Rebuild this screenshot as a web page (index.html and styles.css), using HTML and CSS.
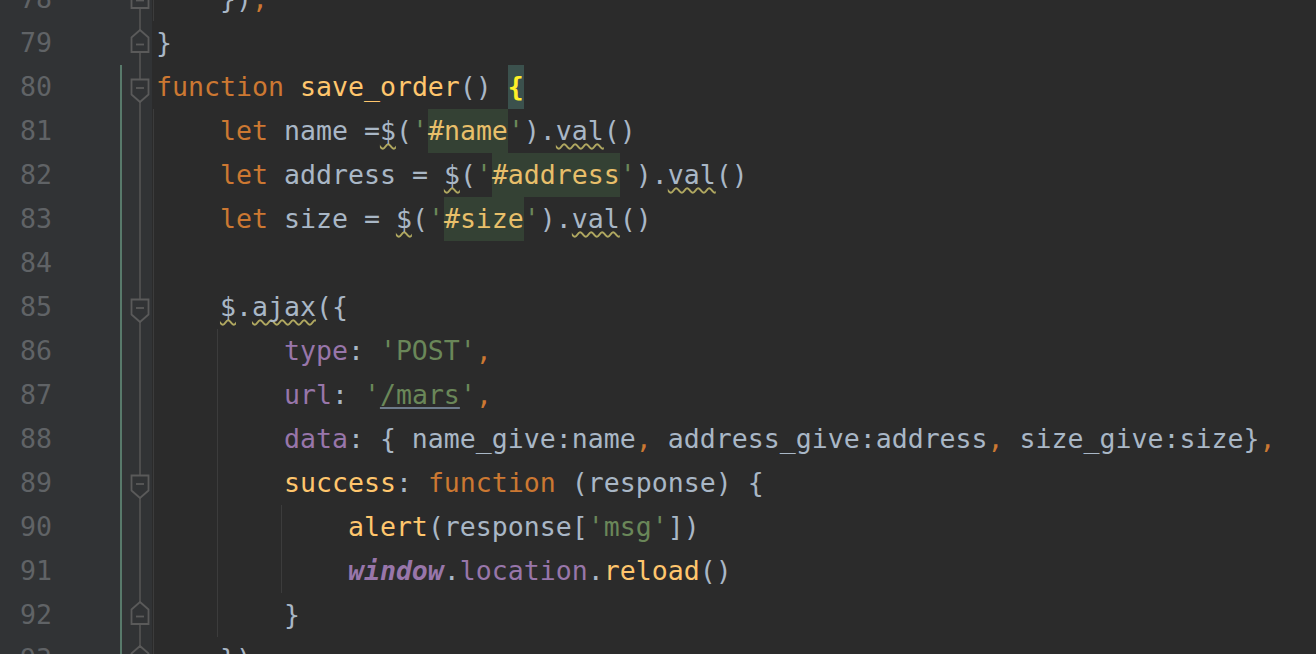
FILE: index.html
```html
<!DOCTYPE html>
<html>
<head>
<meta charset="utf-8">
<link rel="stylesheet" href="styles.css">
</head>
<body>
<div class="editor">
  <div class="row">
    <div class="ln">78</div><div class="vcs"></div>
    <div class="fold"><svg class="mk" viewBox="0 0 30 44"><path class="mk-s" d="M18,9 L26.5,16.5 V31 H9.5 V16.5 Z"/><path class="mk-m" d="M14,23.5 H22"/></svg></div>
    <div class="code g0">    <span class="p">})</span><span class="kw">;</span></div>
  </div>
  <div class="row">
    <div class="ln">79</div><div class="vcs"></div>
    <div class="fold"><svg class="mk" viewBox="0 0 30 44"><path class="mk-s" d="M18,9 L26.5,16.5 V31 H9.5 V16.5 Z"/><path class="mk-m" d="M14,23.5 H22"/></svg></div>
    <div class="code"><span class="p">}</span></div>
  </div>
  <div class="row">
    <div class="ln">80</div><div class="vcs on"></div>
    <div class="fold"><svg class="mk" viewBox="0 0 30 44"><path class="mk-s" d="M9.5,14.5 H26.5 V29.5 L18,37 L9.5,29.5 Z"/><path class="mk-m" d="M14,23 H22"/></svg></div>
    <div class="code"><span class="kw">function</span> <span class="fn">save_order</span><span class="p">() </span><span class="brace">{</span></div>
  </div>
  <div class="row">
    <div class="ln">81</div><div class="vcs on"></div>
    <div class="fold"></div>
    <div class="code g0">    <span class="kw">let</span><span class="p"> name =</span><span class="p wv">$</span><span class="p">(</span><span class="str">'</span><span class="sel">#name</span><span class="str">'</span><span class="p">).</span><span class="p wv">val</span><span class="p">()</span></div>
  </div>
  <div class="row">
    <div class="ln">82</div><div class="vcs on"></div>
    <div class="fold"></div>
    <div class="code g0">    <span class="kw">let</span><span class="p"> address = </span><span class="p wv">$</span><span class="p">(</span><span class="str">'</span><span class="sel">#address</span><span class="str">'</span><span class="p">).</span><span class="p wv">val</span><span class="p">()</span></div>
  </div>
  <div class="row">
    <div class="ln">83</div><div class="vcs on"></div>
    <div class="fold"></div>
    <div class="code g0">    <span class="kw">let</span><span class="p"> size = </span><span class="p wv">$</span><span class="p">(</span><span class="str">'</span><span class="sel">#size</span><span class="str">'</span><span class="p">).</span><span class="p wv">val</span><span class="p">()</span></div>
  </div>
  <div class="row">
    <div class="ln">84</div><div class="vcs on"></div>
    <div class="fold"></div>
    <div class="code g0"></div>
  </div>
  <div class="row">
    <div class="ln">85</div><div class="vcs on"></div>
    <div class="fold"><svg class="mk" viewBox="0 0 30 44"><path class="mk-s" d="M9.5,14.5 H26.5 V29.5 L18,37 L9.5,29.5 Z"/><path class="mk-m" d="M14,23 H22"/></svg></div>
    <div class="code g0">    <span class="p wv">$</span><span class="p">.</span><span class="p wv">ajax</span><span class="p">({</span></div>
  </div>
  <div class="row">
    <div class="ln">86</div><div class="vcs on"></div>
    <div class="fold"></div>
    <div class="code g04">        <span class="prop">type</span><span class="p">: </span><span class="str">'POST'</span><span class="kw">,</span></div>
  </div>
  <div class="row">
    <div class="ln">87</div><div class="vcs on"></div>
    <div class="fold"></div>
    <div class="code g04">        <span class="prop">url</span><span class="p">: </span><span class="str">'</span><span class="str url">/mars</span><span class="str">'</span><span class="kw">,</span></div>
  </div>
  <div class="row">
    <div class="ln">88</div><div class="vcs on"></div>
    <div class="fold"></div>
    <div class="code g04">        <span class="prop">data</span><span class="p">: { name_give:name</span><span class="kw">,</span><span class="p"> address_give:address</span><span class="kw">,</span><span class="p"> size_give:size}</span><span class="kw">,</span></div>
  </div>
  <div class="row">
    <div class="ln">89</div><div class="vcs on"></div>
    <div class="fold"><svg class="mk" viewBox="0 0 30 44"><path class="mk-s" d="M9.5,14.5 H26.5 V29.5 L18,37 L9.5,29.5 Z"/><path class="mk-m" d="M14,23 H22"/></svg></div>
    <div class="code g04">        <span class="fn">success</span><span class="p">: </span><span class="kw">function</span><span class="p"> (response) {</span></div>
  </div>
  <div class="row">
    <div class="ln">90</div><div class="vcs on"></div>
    <div class="fold"></div>
    <div class="code g048">            <span class="fn">alert</span><span class="p">(response[</span><span class="str">'msg'</span><span class="p">])</span></div>
  </div>
  <div class="row">
    <div class="ln">91</div><div class="vcs on"></div>
    <div class="fold"></div>
    <div class="code g048">            <span class="glob">window</span><span class="p">.</span><span class="prop">location</span><span class="p">.</span><span class="fn">reload</span><span class="p">()</span></div>
  </div>
  <div class="row">
    <div class="ln">92</div><div class="vcs on"></div>
    <div class="fold"><svg class="mk" viewBox="0 0 30 44"><path class="mk-s" d="M18,9 L26.5,16.5 V31 H9.5 V16.5 Z"/><path class="mk-m" d="M14,23.5 H22"/></svg></div>
    <div class="code g04">        <span class="p">}</span></div>
  </div>
  <div class="row">
    <div class="ln">93</div><div class="vcs on"></div>
    <div class="fold"><svg class="mk" viewBox="0 0 30 44"><path class="mk-s" d="M18,9 L26.5,16.5 V31 H9.5 V16.5 Z"/><path class="mk-m" d="M14,23.5 H22"/></svg></div>
    <div class="code g0">    <span class="p">})</span><span class="kw">;</span></div>
  </div>
</div>
</body>
</html>
```

FILE: styles.css
```css
html, body {
  margin: 0;
  padding: 0;
  background: #2b2b2b;
  height: 654px;
  overflow: hidden;
}

.editor {
  margin-top: -23px;
  font-family: "DejaVu Sans Mono", "Liberation Mono", monospace;
  font-size: 26.57px;
  line-height: 44px;
  color: #a9b7c6;
}

.row {
  display: flex;
  height: 44px;
}

.ln {
  width: 120px;
  box-sizing: border-box;
  padding-right: 68px;
  text-align: right;
  color: #606366;
  background: #313335;
  flex: none;
}

.vcs {
  width: 2px;
  flex: none;
  background: #313335;
}

.vcs.on {
  background: #587a6b;
}

.fold {
  width: 30px;
  flex: none;
  background:
    linear-gradient(#4d4d4d, #4d4d4d) 17px 0 / 2px 100% no-repeat,
    #313335;
}

.mk {
  display: block;
  width: 30px;
  height: 44px;
}

.mk-s {
  fill: #313335;
  stroke: #5a5a5a;
  stroke-width: 1.8;
}

.mk-m {
  stroke: #5a5a5a;
  stroke-width: 1.8;
}

.code {
  flex: 1;
  padding-left: 4px;
  white-space: pre;
}

.g0 {
  background: linear-gradient(#3c3c3c, #3c3c3c) 1px 0 / 1px 100% no-repeat;
}

.g04 {
  background:
    linear-gradient(#3c3c3c, #3c3c3c) 1px 0 / 1px 100% no-repeat,
    linear-gradient(#3c3c3c, #3c3c3c) 65px 0 / 1px 100% no-repeat;
}

.g048 {
  background:
    linear-gradient(#3c3c3c, #3c3c3c) 1px 0 / 1px 100% no-repeat,
    linear-gradient(#3c3c3c, #3c3c3c) 65px 0 / 1px 100% no-repeat,
    linear-gradient(#3c3c3c, #3c3c3c) 129px 0 / 1px 100% no-repeat;
}

.p { color: #a9b7c6; }
.kw { color: #cc7832; }
.fn { color: #ffc66d; }
.str { color: #6a8759; }
.prop { color: #9876aa; }

.glob {
  color: #9876aa;
  font-style: italic;
  font-weight: bold;
}

.sel {
  display: inline-block;
  color: #e8bf6a;
  background: #344134;
  height: 44px;
}

.brace {
  display: inline-block;
  color: #ffef28;
  font-weight: bold;
  background: #3b514d;
  height: 44px;
}

.wv {
  text-decoration: underline wavy #b0a860;
  text-decoration-thickness: 1.5px;
  text-underline-offset: 3px;
  text-decoration-skip-ink: none;
}

.url {
  text-decoration: underline solid #6e7b8b;
  text-decoration-thickness: 2px;
  text-underline-offset: 3px;
  text-decoration-skip-ink: none;
}
```
